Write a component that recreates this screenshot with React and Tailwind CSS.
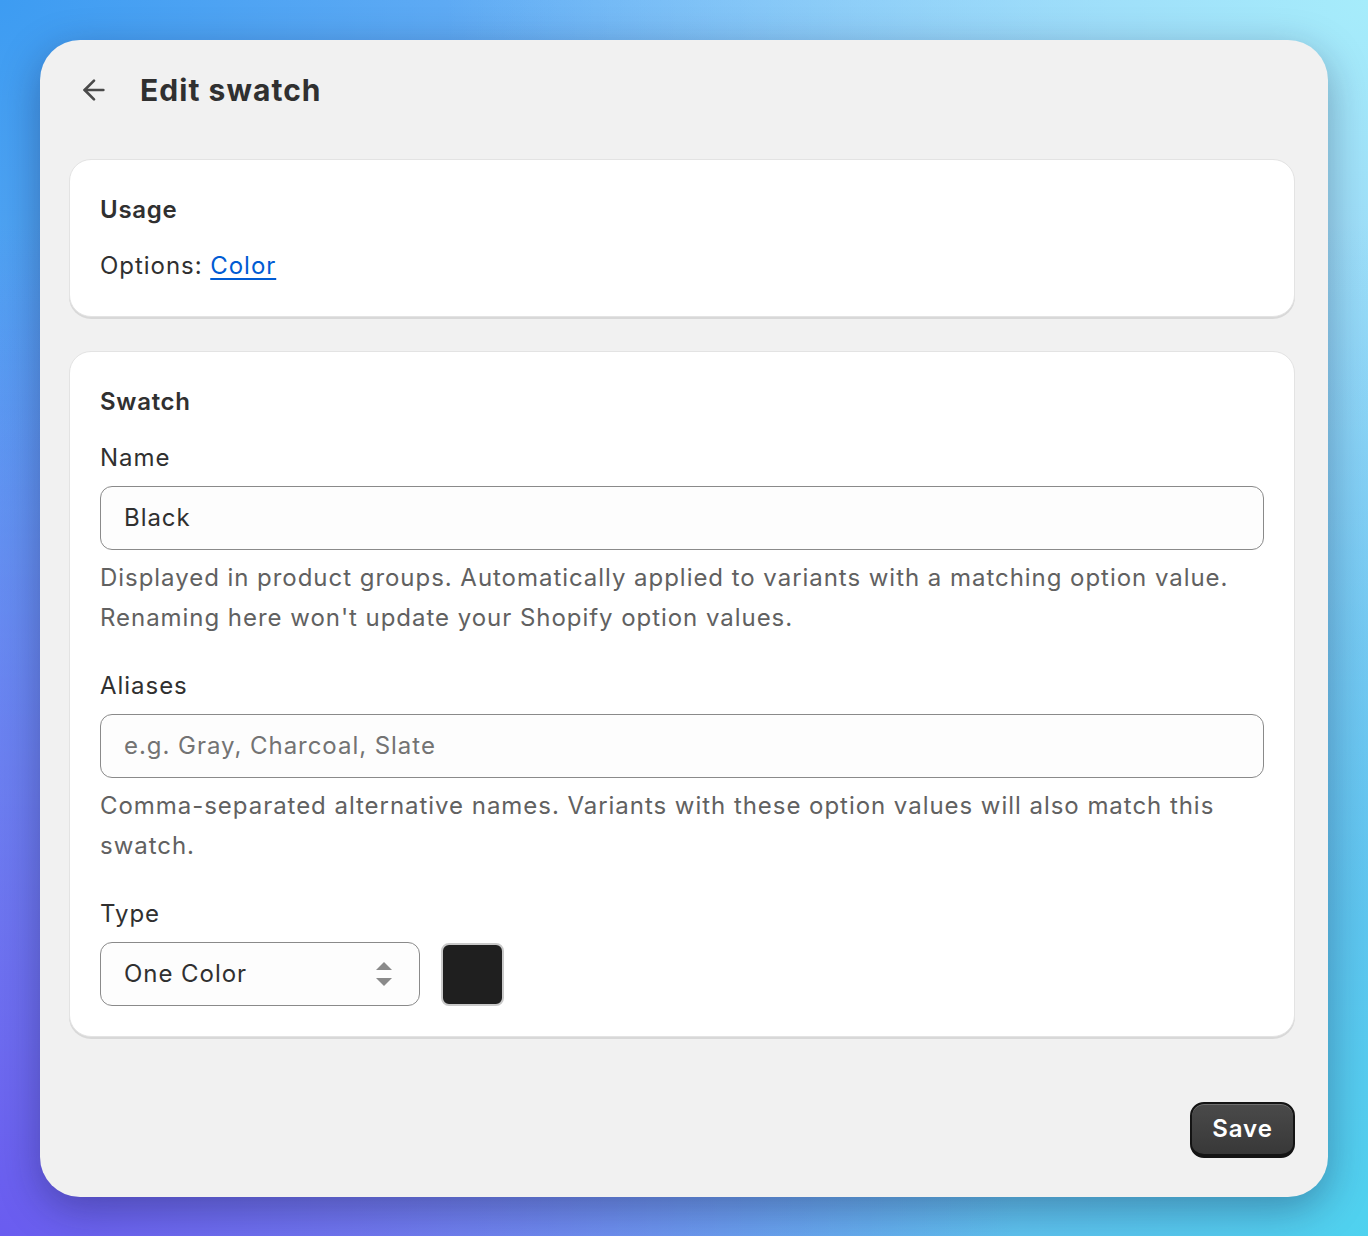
import { ArrowLeft } from 'lucide-react';

function Field({ label, children, help }) {
  return (
    <div className="flex flex-col">
      <label className="text-[24px] leading-[40px] tracking-[0.04em] text-[#303030]">{label}</label>
      <div className="mt-2">{children}</div>
      {help && <p className="mt-2 text-[24px] leading-[40px] tracking-[0.04em] text-[#616161]">{help}</p>}
    </div>
  );
}

function Card({ children }) {
  return (
    <div className="rounded-[22px] border border-[#e3e3e3] bg-white px-[30px] py-[30px] shadow-[0_2px_0_rgba(0,0,0,0.1)]">
      {children}
    </div>
  );
}

export default function App() {
  return (
    <div className="min-h-[1236px] w-full p-[40px] font-['Inter',sans-serif] bg-[radial-gradient(circle_at_0%_100%,#6a5cf0_0%,transparent_55%),radial-gradient(circle_at_100%_100%,#4fd2ef_0%,transparent_55%),radial-gradient(circle_at_100%_0%,#a6ecfb_0%,transparent_50%),radial-gradient(circle_at_0%_0%,#3d9cf2_0%,transparent_60%),linear-gradient(#8ebff7,#7aa6ef)]">
      <div className="flex flex-col rounded-[40px] bg-[#f1f1f1] pl-[29px] pr-[33px] pt-[30px] pb-[39px] shadow-[0_12px_40px_rgba(20,20,60,0.35)]">
        <div className="flex h-[40px] items-center">
          <ArrowLeft size={32} strokeWidth={2} className="ml-[9px] text-[#4a4a4a]" />
          <h1 className="ml-[30px] text-[30px] font-bold tracking-[0.035em] text-[#303030]">Edit swatch</h1>
        </div>

        <div className="mt-[49px]">
          <Card>
            <h2 className="text-[24px] font-semibold leading-[40px] tracking-[0.03em] text-[#303030]">Usage</h2>
            <p className="mt-4 text-[24px] leading-[40px] tracking-[0.04em] text-[#303030]">
              Options: <a href="#" className="text-[#005bd3] underline underline-offset-4">Color</a>
            </p>
          </Card>
        </div>

        <div className="mt-[34px]">
          <Card>
            <h2 className="text-[24px] font-semibold leading-[40px] tracking-[0.03em] text-[#303030]">Swatch</h2>
            <div className="mt-4 flex flex-col gap-7">
              <Field
                label="Name"
                help={
                  <>
                    Displayed in product groups. Automatically applied to variants with a matching option value.
                    <br />
                    Renaming here won't update your Shopify option values.
                  </>
                }
              >
                <div className="flex h-[64px] items-center rounded-[12px] border border-[#8a8a8a] bg-[#fdfdfd] px-[23px] text-[24px] tracking-[0.04em] text-[#303030]">
                  Black
                </div>
              </Field>

              <Field
                label="Aliases"
                help="Comma-separated alternative names. Variants with these option values will also match this swatch."
              >
                <div className="flex h-[64px] items-center rounded-[12px] border border-[#8a8a8a] bg-[#fdfdfd] px-[23px] text-[24px] tracking-[0.04em] text-[#737373]">
                  e.g. Gray, Charcoal, Slate
                </div>
              </Field>

              <Field label="Type">
                <div className="flex items-center gap-[21px]">
                  <div className="flex h-[64px] w-[320px] items-center justify-between rounded-[12px] border border-[#8a8a8a] bg-[#fdfdfd] pl-[23px] pr-[26px] text-[24px] tracking-[0.04em] text-[#303030]">
                    One Color
                    <svg width="18" height="26" viewBox="0 0 18 26" className="text-[#8a8a8a]">
                      <path d="M9 1 L17 9 H1 Z" fill="currentColor" />
                      <path d="M9 25 L17 17 H1 Z" fill="currentColor" />
                    </svg>
                  </div>
                  <div className="h-[63px] w-[63px] rounded-[8px] border-2 border-[#c9c9c9] bg-[#1f1f1f]" />
                </div>
              </Field>
            </div>
          </Card>
        </div>

        <div className="mt-[65px] flex justify-end">
          <button className="h-[56px] w-[105px] rounded-[14px] border-2 border-b-[4px] border-[#141414] bg-[linear-gradient(#4a4a4a,#383838)] text-[24px] font-semibold tracking-[0.04em] text-white shadow-[inset_0_1px_0_rgba(255,255,255,0.2)]">
            Save
          </button>
        </div>
      </div>
    </div>
  );
}
